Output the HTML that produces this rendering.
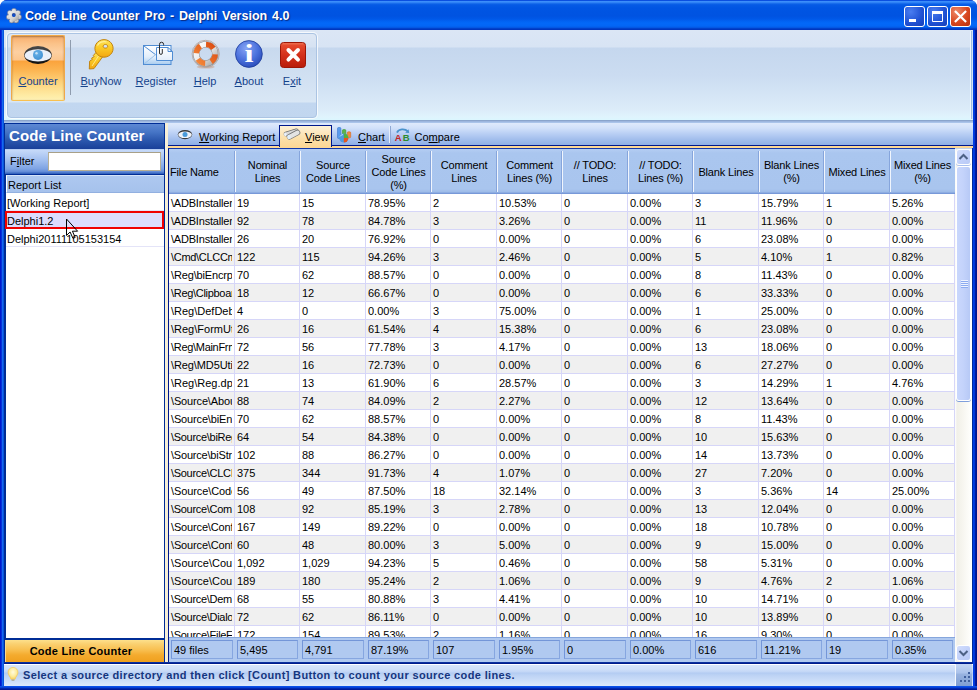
<!DOCTYPE html>
<html><head><meta charset="utf-8"><title>Code Line Counter Pro - Delphi Version 4.0</title>
<style>
*,*:before,*:after{box-sizing:border-box;margin:0;padding:0}
html,body{width:977px;height:690px;overflow:hidden;background:#fff}
body{font-family:"Liberation Sans","DejaVu Sans",sans-serif;font-size:11px;color:#000;position:relative}
div,span{position:absolute;white-space:nowrap}
u{text-decoration:underline}
#win{left:0;top:0;width:977px;height:690px;background:linear-gradient(90deg,#0019cf 0,#0019cf 1px,#0831d9 1px,#0831d9 2px,#166aee 2px,#166aee 3px,#0855dd 3px,#0855dd 4px,#00209c 4px,#00209c 973px,#003ce6 973px,#003ce6 974px,#0037d6 974px,#0037d6 975px,#001c9e 975px,#001c9e 976px,#00138c 976px);border-radius:7px 7px 0 0;overflow:hidden}
#wbot{left:0;top:686px;width:977px;height:4px;background:linear-gradient(#0a50e8 0,#0a50e8 1px,#0540d8 1px,#0540d8 2px,#0028b0 2px,#0028b0 3px,#001a98 3px)}
#title{left:0;top:0;width:977px;height:30px;background:linear-gradient(#0a4fe0 0,#0a4fe0 1px,#3c8ffb 1px,#3a8cfa 2px,#2478f0 3px,#0c61e8 4px,#055ae5 5px,#0055e3 8px,#0053e1 16px,#0058e8 19px,#0262f2 21px,#0368f8 23px,#0366f6 26px,#0458e4 27.5px,#0142cc 28.5px,#0030b8 30px)}
#title .txt{left:25px;top:9px;font-weight:bold;font-size:12.5px;color:#fff;text-shadow:1px 1px 1px #0a2a80;letter-spacing:0;word-spacing:1.35px}
.cap{top:6px;width:21px;height:21px;border:1px solid #fff;border-radius:3px;background:radial-gradient(circle at 30% 25%,#4a7df0,#1f50d2 60%,#163fb8)}
#bmin{left:904px}#bmax{left:927px}#bcls{left:950px;background:radial-gradient(circle at 30% 25%,#ee8a6a,#d8471f 55%,#b8300e)}
#client{left:4px;top:30px;width:969px;height:656px;overflow:hidden;background:#bfd4ee}
/* ribbon */
#ribbon{left:0;top:0;width:969px;height:93px;background:linear-gradient(#dbe6f5 0,#d8e4f4 17px,#c5d7ee 18px,#cbdcf1 45px,#dcecf9 80px,#e0f4fd 87px,#dbf6fe 90px,#8aa4cc 90px,#8aa4cc 91px,#9db6de 91px,#9db6de 92px,#aac4ea 92px)}
#redge{left:966px;top:1px;width:3px;height:88px;background:linear-gradient(90deg,#f0f6fc 0,#f0f6fc 1px,#a2bde1 1px,#a2bde1 2px,#d3e2f5 2px)}
#group{left:3px;top:3px;width:310px;height:85px;border:1px solid #abc4e3;border-radius:4px;box-shadow:0 0 0 1px rgba(255,255,255,.75);background:linear-gradient(#dee8f5 0,#d6e2f2 13px,#c8d9ee 14px,#d3e2f3 50px,#d9e7f5 68px,#c2d7f0 69px,#c1d6ef 85px)}
.rb{top:1px;height:66px;text-align:center;color:#15428b;font-size:11px}
.rb .lb{left:0;right:0;top:39px;text-align:center;line-height:14px}
#rb0 .lb{top:38px;left:-1px;right:-1px}
#rb0{left:3px;width:54px;border:1px solid #f0a848;border-bottom-color:#f8c050;border-radius:2px;background:linear-gradient(#f7ae6e 0,#fbc38a 8px,#fdd0a2 16px,#fcc68e 24px,#fba33c 25px,#fcb24e 33px,#fdd680 48px,#feeca6 60px,#fdf0b4 64px);box-shadow:inset 0 1px 2px rgba(120,80,40,.6)}
#sep{left:62px;top:6px;width:1px;height:55px;background:#8f9cae}

/* below ribbon strip */
#strip{display:none}
/* side panel: page x=4..164, y=123..662 => client coords x=0..160,y=93..632 */
#side{left:0;top:93px;width:161px;height:539px;background:#fff;border:1px solid #002d96;border-bottom:0}
#shead{left:0;top:0;width:159px;height:25px;background:linear-gradient(#5e89d3 0,#4675c6 8px,#2c58ae 16px,#1d459e 23px,#1a3f98 25px)}
#shead span{left:4px;top:3px;font-weight:bold;font-size:15px;color:#fff;letter-spacing:.08px}
#sfilt{left:0;top:25px;width:159px;height:25px;background:linear-gradient(#a4c0ee 0,#c6daf9 1px,#bcd2f6 4px,#9fbdef 12px,#7da2e3 20px,#5f89d6 23px,#3c69c2 24px,#3060ba 25px)}
#sfilt span{left:5px;top:6px;color:#000}
#sfilt i{position:absolute;left:43px;top:3px;width:113px;height:19px;background:#fff;border:1px solid #b8b096;border-top-color:#a8a088;display:block}
#slist{left:0;top:50px;width:159px;height:466px;background:#fff;border-top:1px solid #002d96;border-bottom:2px solid #002d96;border-left:1px solid #002d96}
#slh{left:0;top:0;width:158px;height:18px;background:linear-gradient(#aec8f0,#a6c2ec);border-left:1px solid #fff;border-top:1px solid #d5e3f8;border-bottom:1px solid #92b0e0}
#slh span{left:1px;top:3px}
.li{left:0;width:158px;height:18px;border-bottom:1px solid #e4e4f8}
.li span{left:1px;top:4px}
#lsel{background:#dcdcfc;border:2px solid #f00000}
#lsel{left:-1px;width:159px}
#lsel span{left:0;top:2px}
#sbtn{left:0;top:516px;width:159px;height:22px;border-left:1px solid #fbd890;background:linear-gradient(#fde08c 0,#fad070 4px,#f8bf50 10px,#f4ab2e 15px,#f0a01e 22px);text-align:center}
#sbtn span{left:0;right:8px;top:5px;font-weight:bold;color:#000;text-align:center;letter-spacing:.25px}
#split{left:161px;top:93px;width:3px;height:540px;background:#f7efd6}

/* right panel: page x=168..972 -> client x=164..968 ; page y=123.. -> client y=93 */
#tabs{left:164px;top:93px;width:805px;height:22px;background:linear-gradient(#dfeafc 0,#d2e1fa 5px,#bcd1f5 10px,#a4bfed 16px,#8fafe6 22px)}
#tabline{left:164px;top:115px;width:805px;height:3px;background:#fdd795;border-top:1px solid #00188c}
.tab{top:0;height:22px}
.tab span{top:8px}
#tact{left:111px;top:2px;width:53px;height:22px;border:1px solid #00188c;border-bottom:0;background:linear-gradient(#fdf1d8,#fce0ab 12px,#fdd795);z-index:2}
#tsep{left:221px;top:3px;width:2px;height:17px;border-left:1px solid #e6eefb;border-right:1px solid #8fa8d4}
#grid{left:164px;top:118px;width:787px;height:514px;background:#fff;border-left:1px solid #00188c;border-top:1px solid #1238a8;overflow:hidden}
#ghead{left:0;top:0;width:786px;height:45px;background:linear-gradient(#b4cdf3 0,#aac6ef 4px,#a9c5ee 40px,#9dbbe8 43px,#7f9fdc 44px,#6f92d4 45px)}
.hc{top:0;height:44px;text-align:center;line-height:13px;letter-spacing:-.15px}
.hc span{left:0;right:0;top:calc(50% + 1px);transform:translateY(-50%);text-align:center;white-space:nowrap}
.hc.l span{text-align:left;left:1px}
.hc:after{content:"";position:absolute;right:-1px;top:2px;height:41px;width:2px;border-left:1px solid #86a5dc;border-right:1px solid #f0f5fd}
.hc:last-child:after{display:none}
#gbody{left:0;top:45px;width:786px;height:444px;overflow:hidden;background:#fff}
.r{left:0;width:786px;height:18px;border-bottom:1px solid #d6d6f8;background:#fff}
.r.alt{background:#f0f0f0}
.c{top:0;height:17px;line-height:19px;padding-left:2px;overflow:hidden;border-right:1px solid #d6d6f8}
.c:first-child{border-right:0;width:63px !important;letter-spacing:-.3px}
.r:before{content:"";position:absolute;left:65px;top:0;width:1px;height:17px;background:#d6d6f8}
#gfoot{left:0;top:488px;width:786px;height:26px;background:#b0c9f0;border-top:1px solid #86a6dc}
.fc{top:2px;height:19px;line-height:19px;padding-left:2px;border:1px solid #7496d8;border-right-color:#86a6e0;border-bottom-color:#86a6e0}
#vsb{left:951px;top:119px;width:17px;height:513px;background:linear-gradient(90deg,#fff 0,#f1f0e8 2px,#f7f6f0 8px,#fefefb 15px,#fff 17px)}
.sbb{left:1px;width:15px;height:16px;border:1px solid #fff;border-radius:3px;background:linear-gradient(135deg,#d3defc,#c2d1fa 50%,#b9caf6)}
#sup{top:0}#sdn{top:496px}
#sth{left:1px;top:17px;width:15px;height:235px;border:1px solid #fff;border-radius:3px;background:linear-gradient(90deg,#c9d7fc 0,#c4d3fb 6px,#b7c9f6 13px);box-shadow:0 1px 0 #7f9fdc}
#sup{box-shadow:0 1px 0 #a9bfee}
#sgr{left:4px;top:113px;width:7px;height:8px;background:repeating-linear-gradient(#eef3ff 0,#eef3ff 1px,#8cabf0 1px,#8cabf0 2px)}
#rbord{left:968px;top:118px;width:1px;height:516px;background:#002a9c}
#gbot{left:0;top:632px;width:969px;height:2px;background:linear-gradient(#0a309e 0,#0a309e 1px,#001c8c 1px)}
/* status bar page y=664..686 -> client 634..656 */
#status{left:0;top:634px;width:969px;height:22px;background:linear-gradient(#fff 0,#fff 1px,#d6e4fa 1px,#cfdff9 5px,#c2d6f6 8px,#b3cbf2 9px,#bcd2f4 11px,#cadcf8 16px,#dde9fb 22px)}
#sgrip{left:951px;top:0;width:17px;height:22px;border-left:1px solid #f4f8fe;background:linear-gradient(#c4d6f4 0,#a9c1ea 9px,#98b3e0 10px,#7f9ed2 22px)}
#status span{left:19px;top:5px;font-weight:bold;color:#15367f;font-size:11px;letter-spacing:.36px}
</style></head><body>
<div id="win">
 <div id="title"><div class="txt">Code Line Counter Pro - Delphi Version 4.0</div>
  <div class="cap" id="bmin"></div><div class="cap" id="bmax"></div><div class="cap" id="bcls"></div>
 </div>
 <div id="wbot"></div>
 <div id="client">
  <div id="ribbon">
   <div id="redge"></div>
   <div id="group">
    <div class="rb" id="rb0"><span class="lb"><u>C</u>ounter</span></div>
    <div id="sep"></div>
    <div class="rb" style="left:66px;width:54px"><span class="lb"><u>B</u>uyNow</span></div>
    <div class="rb" style="left:120px;width:56px"><span class="lb"><u>R</u>egister</span></div>
    <div class="rb" style="left:176px;width:42px"><span class="lb"><u>H</u>elp</span></div>
    <div class="rb" style="left:218px;width:46px"><span class="lb"><u>A</u>bout</span></div>
    <div class="rb" style="left:264px;width:40px"><span class="lb">E<u>x</u>it</span></div>
   </div>
  </div>
  <div id="strip"></div>
  <div id="side">
   <div id="shead"><span>Code Line Counter</span></div>
   <div id="sfilt"><span>F<u>i</u>lter</span><i></i></div>
   <div id="slist">
    <div id="slh"><span>Report List</span></div>
    <div class="li" style="top:18px"><span>[Working Report]</span></div>
    <div class="li" id="lsel" style="top:36px"><span>Delphi1.2</span></div>
    <div class="li" style="top:54px"><span>Delphi20111105153154</span></div>
   </div>
   <div id="sbtn"><span>Code Line Counter</span></div>
  </div>
  <div id="split"></div>
  <div id="tabs">
   <div class="tab" style="left:0;width:111px"><span style="left:31px"><u>W</u>orking Report</span></div>
   <div class="tab" id="tact"><span style="left:25px;top:5px"><u>V</u>iew</span></div>
   <div class="tab" style="left:166px;width:54px"><span style="left:24px"><u>C</u>hart</span></div>
   <div id="tsep"></div>
   <div class="tab" style="left:224px;width:74px"><span style="left:22.5px">Co<u>m</u>pare</span></div>
  </div>
  <div id="tabline"></div>
  <div id="grid"><div id="ghead"><div class="hc l" style="left:0px;width:66px"><span>File Name</span></div><div class="hc" style="left:66px;width:65px"><span>Nominal<br>Lines</span></div><div class="hc" style="left:131px;width:66px"><span>Source<br>Code Lines</span></div><div class="hc" style="left:197px;width:65px"><span>Source<br>Code Lines<br>(%)</span></div><div class="hc" style="left:262px;width:66px"><span>Comment<br>Lines</span></div><div class="hc" style="left:328px;width:65px"><span>Comment<br>Lines (%)</span></div><div class="hc" style="left:393px;width:66px"><span>// TODO:<br>Lines</span></div><div class="hc" style="left:459px;width:65px"><span>// TODO:<br>Lines (%)</span></div><div class="hc" style="left:524px;width:66px"><span>Blank Lines</span></div><div class="hc" style="left:590px;width:65px"><span>Blank Lines<br>(%)</span></div><div class="hc" style="left:655px;width:66px"><span>Mixed Lines</span></div><div class="hc" style="left:721px;width:65px"><span>Mixed Lines<br>(%)</span></div></div><div id="gbody"><div class="r" style="top:0px"><div class="c" style="left:0px;width:66px;letter-spacing:-0.2px">\ADBInstaller\ADBInst.dpr</div><div class="c" style="left:66px;width:65px">19</div><div class="c" style="left:131px;width:66px">15</div><div class="c" style="left:197px;width:65px">78.95%</div><div class="c" style="left:262px;width:66px">2</div><div class="c" style="left:328px;width:65px">10.53%</div><div class="c" style="left:393px;width:66px">0</div><div class="c" style="left:459px;width:65px">0.00%</div><div class="c" style="left:524px;width:66px">3</div><div class="c" style="left:590px;width:65px">15.79%</div><div class="c" style="left:655px;width:66px">1</div><div class="c" style="left:721px;width:65px">5.26%</div></div><div class="r alt" style="top:18px"><div class="c" style="left:0px;width:66px;letter-spacing:-0.2px">\ADBInstaller\MainFrm.pas</div><div class="c" style="left:66px;width:65px">92</div><div class="c" style="left:131px;width:66px">78</div><div class="c" style="left:197px;width:65px">84.78%</div><div class="c" style="left:262px;width:66px">3</div><div class="c" style="left:328px;width:65px">3.26%</div><div class="c" style="left:393px;width:66px">0</div><div class="c" style="left:459px;width:65px">0.00%</div><div class="c" style="left:524px;width:66px">11</div><div class="c" style="left:590px;width:65px">11.96%</div><div class="c" style="left:655px;width:66px">0</div><div class="c" style="left:721px;width:65px">0.00%</div></div><div class="r" style="top:36px"><div class="c" style="left:0px;width:66px;letter-spacing:-0.2px">\ADBInstaller\Utils.pas</div><div class="c" style="left:66px;width:65px">26</div><div class="c" style="left:131px;width:66px">20</div><div class="c" style="left:197px;width:65px">76.92%</div><div class="c" style="left:262px;width:66px">0</div><div class="c" style="left:328px;width:65px">0.00%</div><div class="c" style="left:393px;width:66px">0</div><div class="c" style="left:459px;width:65px">0.00%</div><div class="c" style="left:524px;width:66px">6</div><div class="c" style="left:590px;width:65px">23.08%</div><div class="c" style="left:655px;width:66px">0</div><div class="c" style="left:721px;width:65px">0.00%</div></div><div class="r alt" style="top:54px"><div class="c" style="left:0px;width:66px;letter-spacing:-0.3px">\Cmd\CLCCmd.dpr</div><div class="c" style="left:66px;width:65px">122</div><div class="c" style="left:131px;width:66px">115</div><div class="c" style="left:197px;width:65px">94.26%</div><div class="c" style="left:262px;width:66px">3</div><div class="c" style="left:328px;width:65px">2.46%</div><div class="c" style="left:393px;width:66px">0</div><div class="c" style="left:459px;width:65px">0.00%</div><div class="c" style="left:524px;width:66px">5</div><div class="c" style="left:590px;width:65px">4.10%</div><div class="c" style="left:655px;width:66px">1</div><div class="c" style="left:721px;width:65px">0.82%</div></div><div class="r" style="top:72px"><div class="c" style="left:0px;width:66px;letter-spacing:-0.15px">\Reg\biEncrpt.pas</div><div class="c" style="left:66px;width:65px">70</div><div class="c" style="left:131px;width:66px">62</div><div class="c" style="left:197px;width:65px">88.57%</div><div class="c" style="left:262px;width:66px">0</div><div class="c" style="left:328px;width:65px">0.00%</div><div class="c" style="left:393px;width:66px">0</div><div class="c" style="left:459px;width:65px">0.00%</div><div class="c" style="left:524px;width:66px">8</div><div class="c" style="left:590px;width:65px">11.43%</div><div class="c" style="left:655px;width:66px">0</div><div class="c" style="left:721px;width:65px">0.00%</div></div><div class="r alt" style="top:90px"><div class="c" style="left:0px;width:66px;letter-spacing:-0.3px">\Reg\Clipboard.pas</div><div class="c" style="left:66px;width:65px">18</div><div class="c" style="left:131px;width:66px">12</div><div class="c" style="left:197px;width:65px">66.67%</div><div class="c" style="left:262px;width:66px">0</div><div class="c" style="left:328px;width:65px">0.00%</div><div class="c" style="left:393px;width:66px">0</div><div class="c" style="left:459px;width:65px">0.00%</div><div class="c" style="left:524px;width:66px">6</div><div class="c" style="left:590px;width:65px">33.33%</div><div class="c" style="left:655px;width:66px">0</div><div class="c" style="left:721px;width:65px">0.00%</div></div><div class="r" style="top:108px"><div class="c" style="left:0px;width:66px;letter-spacing:0px">\Reg\DefDebug.inc</div><div class="c" style="left:66px;width:65px">4</div><div class="c" style="left:131px;width:66px">0</div><div class="c" style="left:197px;width:65px">0.00%</div><div class="c" style="left:262px;width:66px">3</div><div class="c" style="left:328px;width:65px">75.00%</div><div class="c" style="left:393px;width:66px">0</div><div class="c" style="left:459px;width:65px">0.00%</div><div class="c" style="left:524px;width:66px">1</div><div class="c" style="left:590px;width:65px">25.00%</div><div class="c" style="left:655px;width:66px">0</div><div class="c" style="left:721px;width:65px">0.00%</div></div><div class="r alt" style="top:126px"><div class="c" style="left:0px;width:66px;letter-spacing:0px">\Reg\FormUtils.pas</div><div class="c" style="left:66px;width:65px">26</div><div class="c" style="left:131px;width:66px">16</div><div class="c" style="left:197px;width:65px">61.54%</div><div class="c" style="left:262px;width:66px">4</div><div class="c" style="left:328px;width:65px">15.38%</div><div class="c" style="left:393px;width:66px">0</div><div class="c" style="left:459px;width:65px">0.00%</div><div class="c" style="left:524px;width:66px">6</div><div class="c" style="left:590px;width:65px">23.08%</div><div class="c" style="left:655px;width:66px">0</div><div class="c" style="left:721px;width:65px">0.00%</div></div><div class="r" style="top:144px"><div class="c" style="left:0px;width:66px;letter-spacing:-0.3px">\Reg\MainFrm.pas</div><div class="c" style="left:66px;width:65px">72</div><div class="c" style="left:131px;width:66px">56</div><div class="c" style="left:197px;width:65px">77.78%</div><div class="c" style="left:262px;width:66px">3</div><div class="c" style="left:328px;width:65px">4.17%</div><div class="c" style="left:393px;width:66px">0</div><div class="c" style="left:459px;width:65px">0.00%</div><div class="c" style="left:524px;width:66px">13</div><div class="c" style="left:590px;width:65px">18.06%</div><div class="c" style="left:655px;width:66px">0</div><div class="c" style="left:721px;width:65px">0.00%</div></div><div class="r alt" style="top:162px"><div class="c" style="left:0px;width:66px;letter-spacing:-0.1px">\Reg\MD5Utils.pas</div><div class="c" style="left:66px;width:65px">22</div><div class="c" style="left:131px;width:66px">16</div><div class="c" style="left:197px;width:65px">72.73%</div><div class="c" style="left:262px;width:66px">0</div><div class="c" style="left:328px;width:65px">0.00%</div><div class="c" style="left:393px;width:66px">0</div><div class="c" style="left:459px;width:65px">0.00%</div><div class="c" style="left:524px;width:66px">6</div><div class="c" style="left:590px;width:65px">27.27%</div><div class="c" style="left:655px;width:66px">0</div><div class="c" style="left:721px;width:65px">0.00%</div></div><div class="r" style="top:180px"><div class="c" style="left:0px;width:66px;letter-spacing:0px">\Reg\Reg.dpr</div><div class="c" style="left:66px;width:65px">21</div><div class="c" style="left:131px;width:66px">13</div><div class="c" style="left:197px;width:65px">61.90%</div><div class="c" style="left:262px;width:66px">6</div><div class="c" style="left:328px;width:65px">28.57%</div><div class="c" style="left:393px;width:66px">0</div><div class="c" style="left:459px;width:65px">0.00%</div><div class="c" style="left:524px;width:66px">3</div><div class="c" style="left:590px;width:65px">14.29%</div><div class="c" style="left:655px;width:66px">1</div><div class="c" style="left:721px;width:65px">4.76%</div></div><div class="r alt" style="top:198px"><div class="c" style="left:0px;width:66px;letter-spacing:-0.15px">\Source\About.pas</div><div class="c" style="left:66px;width:65px">88</div><div class="c" style="left:131px;width:66px">74</div><div class="c" style="left:197px;width:65px">84.09%</div><div class="c" style="left:262px;width:66px">2</div><div class="c" style="left:328px;width:65px">2.27%</div><div class="c" style="left:393px;width:66px">0</div><div class="c" style="left:459px;width:65px">0.00%</div><div class="c" style="left:524px;width:66px">12</div><div class="c" style="left:590px;width:65px">13.64%</div><div class="c" style="left:655px;width:66px">0</div><div class="c" style="left:721px;width:65px">0.00%</div></div><div class="r" style="top:216px"><div class="c" style="left:0px;width:66px;letter-spacing:-0.15px">\Source\biEncrpt.pas</div><div class="c" style="left:66px;width:65px">70</div><div class="c" style="left:131px;width:66px">62</div><div class="c" style="left:197px;width:65px">88.57%</div><div class="c" style="left:262px;width:66px">0</div><div class="c" style="left:328px;width:65px">0.00%</div><div class="c" style="left:393px;width:66px">0</div><div class="c" style="left:459px;width:65px">0.00%</div><div class="c" style="left:524px;width:66px">8</div><div class="c" style="left:590px;width:65px">11.43%</div><div class="c" style="left:655px;width:66px">0</div><div class="c" style="left:721px;width:65px">0.00%</div></div><div class="r alt" style="top:234px"><div class="c" style="left:0px;width:66px;letter-spacing:-0.3px">\Source\biReg.pas</div><div class="c" style="left:66px;width:65px">64</div><div class="c" style="left:131px;width:66px">54</div><div class="c" style="left:197px;width:65px">84.38%</div><div class="c" style="left:262px;width:66px">0</div><div class="c" style="left:328px;width:65px">0.00%</div><div class="c" style="left:393px;width:66px">0</div><div class="c" style="left:459px;width:65px">0.00%</div><div class="c" style="left:524px;width:66px">10</div><div class="c" style="left:590px;width:65px">15.63%</div><div class="c" style="left:655px;width:66px">0</div><div class="c" style="left:721px;width:65px">0.00%</div></div><div class="r" style="top:252px"><div class="c" style="left:0px;width:66px;letter-spacing:-0.2px">\Source\biStrUtils.pas</div><div class="c" style="left:66px;width:65px">102</div><div class="c" style="left:131px;width:66px">88</div><div class="c" style="left:197px;width:65px">86.27%</div><div class="c" style="left:262px;width:66px">0</div><div class="c" style="left:328px;width:65px">0.00%</div><div class="c" style="left:393px;width:66px">0</div><div class="c" style="left:459px;width:65px">0.00%</div><div class="c" style="left:524px;width:66px">14</div><div class="c" style="left:590px;width:65px">13.73%</div><div class="c" style="left:655px;width:66px">0</div><div class="c" style="left:721px;width:65px">0.00%</div></div><div class="r alt" style="top:270px"><div class="c" style="left:0px;width:66px;letter-spacing:-0.3px">\Source\CLCIntf.pas</div><div class="c" style="left:66px;width:65px">375</div><div class="c" style="left:131px;width:66px">344</div><div class="c" style="left:197px;width:65px">91.73%</div><div class="c" style="left:262px;width:66px">4</div><div class="c" style="left:328px;width:65px">1.07%</div><div class="c" style="left:393px;width:66px">0</div><div class="c" style="left:459px;width:65px">0.00%</div><div class="c" style="left:524px;width:66px">27</div><div class="c" style="left:590px;width:65px">7.20%</div><div class="c" style="left:655px;width:66px">0</div><div class="c" style="left:721px;width:65px">0.00%</div></div><div class="r" style="top:288px"><div class="c" style="left:0px;width:66px;letter-spacing:-0.1px">\Source\CodeCounter.pas</div><div class="c" style="left:66px;width:65px">56</div><div class="c" style="left:131px;width:66px">49</div><div class="c" style="left:197px;width:65px">87.50%</div><div class="c" style="left:262px;width:66px">18</div><div class="c" style="left:328px;width:65px">32.14%</div><div class="c" style="left:393px;width:66px">0</div><div class="c" style="left:459px;width:65px">0.00%</div><div class="c" style="left:524px;width:66px">3</div><div class="c" style="left:590px;width:65px">5.36%</div><div class="c" style="left:655px;width:66px">14</div><div class="c" style="left:721px;width:65px">25.00%</div></div><div class="r alt" style="top:306px"><div class="c" style="left:0px;width:66px;letter-spacing:-0.3px">\Source\Compare.pas</div><div class="c" style="left:66px;width:65px">108</div><div class="c" style="left:131px;width:66px">92</div><div class="c" style="left:197px;width:65px">85.19%</div><div class="c" style="left:262px;width:66px">3</div><div class="c" style="left:328px;width:65px">2.78%</div><div class="c" style="left:393px;width:66px">0</div><div class="c" style="left:459px;width:65px">0.00%</div><div class="c" style="left:524px;width:66px">13</div><div class="c" style="left:590px;width:65px">12.04%</div><div class="c" style="left:655px;width:66px">0</div><div class="c" style="left:721px;width:65px">0.00%</div></div><div class="r" style="top:324px"><div class="c" style="left:0px;width:66px;letter-spacing:-0.15px">\Source\ConfigFrm.pas</div><div class="c" style="left:66px;width:65px">167</div><div class="c" style="left:131px;width:66px">149</div><div class="c" style="left:197px;width:65px">89.22%</div><div class="c" style="left:262px;width:66px">0</div><div class="c" style="left:328px;width:65px">0.00%</div><div class="c" style="left:393px;width:66px">0</div><div class="c" style="left:459px;width:65px">0.00%</div><div class="c" style="left:524px;width:66px">18</div><div class="c" style="left:590px;width:65px">10.78%</div><div class="c" style="left:655px;width:66px">0</div><div class="c" style="left:721px;width:65px">0.00%</div></div><div class="r alt" style="top:342px"><div class="c" style="left:0px;width:66px;letter-spacing:-0.15px">\Source\ConfigUtils.pas</div><div class="c" style="left:66px;width:65px">60</div><div class="c" style="left:131px;width:66px">48</div><div class="c" style="left:197px;width:65px">80.00%</div><div class="c" style="left:262px;width:66px">3</div><div class="c" style="left:328px;width:65px">5.00%</div><div class="c" style="left:393px;width:66px">0</div><div class="c" style="left:459px;width:65px">0.00%</div><div class="c" style="left:524px;width:66px">9</div><div class="c" style="left:590px;width:65px">15.00%</div><div class="c" style="left:655px;width:66px">0</div><div class="c" style="left:721px;width:65px">0.00%</div></div><div class="r" style="top:360px"><div class="c" style="left:0px;width:66px;letter-spacing:0px">\Source\CountFrm.pas</div><div class="c" style="left:66px;width:65px">1,092</div><div class="c" style="left:131px;width:66px">1,029</div><div class="c" style="left:197px;width:65px">94.23%</div><div class="c" style="left:262px;width:66px">5</div><div class="c" style="left:328px;width:65px">0.46%</div><div class="c" style="left:393px;width:66px">0</div><div class="c" style="left:459px;width:65px">0.00%</div><div class="c" style="left:524px;width:66px">58</div><div class="c" style="left:590px;width:65px">5.31%</div><div class="c" style="left:655px;width:66px">0</div><div class="c" style="left:721px;width:65px">0.00%</div></div><div class="r alt" style="top:378px"><div class="c" style="left:0px;width:66px;letter-spacing:0px">\Source\CountUtils.pas</div><div class="c" style="left:66px;width:65px">189</div><div class="c" style="left:131px;width:66px">180</div><div class="c" style="left:197px;width:65px">95.24%</div><div class="c" style="left:262px;width:66px">2</div><div class="c" style="left:328px;width:65px">1.06%</div><div class="c" style="left:393px;width:66px">0</div><div class="c" style="left:459px;width:65px">0.00%</div><div class="c" style="left:524px;width:66px">9</div><div class="c" style="left:590px;width:65px">4.76%</div><div class="c" style="left:655px;width:66px">2</div><div class="c" style="left:721px;width:65px">1.06%</div></div><div class="r" style="top:396px"><div class="c" style="left:0px;width:66px;letter-spacing:-0.3px">\Source\Demo.pas</div><div class="c" style="left:66px;width:65px">68</div><div class="c" style="left:131px;width:66px">55</div><div class="c" style="left:197px;width:65px">80.88%</div><div class="c" style="left:262px;width:66px">3</div><div class="c" style="left:328px;width:65px">4.41%</div><div class="c" style="left:393px;width:66px">0</div><div class="c" style="left:459px;width:65px">0.00%</div><div class="c" style="left:524px;width:66px">10</div><div class="c" style="left:590px;width:65px">14.71%</div><div class="c" style="left:655px;width:66px">0</div><div class="c" style="left:721px;width:65px">0.00%</div></div><div class="r alt" style="top:414px"><div class="c" style="left:0px;width:66px;letter-spacing:-0.3px">\Source\Dialogs.pas</div><div class="c" style="left:66px;width:65px">72</div><div class="c" style="left:131px;width:66px">62</div><div class="c" style="left:197px;width:65px">86.11%</div><div class="c" style="left:262px;width:66px">0</div><div class="c" style="left:328px;width:65px">0.00%</div><div class="c" style="left:393px;width:66px">0</div><div class="c" style="left:459px;width:65px">0.00%</div><div class="c" style="left:524px;width:66px">10</div><div class="c" style="left:590px;width:65px">13.89%</div><div class="c" style="left:655px;width:66px">0</div><div class="c" style="left:721px;width:65px">0.00%</div></div><div class="r" style="top:432px"><div class="c" style="left:0px;width:66px;letter-spacing:-0.3px">\Source\FileFind.pas</div><div class="c" style="left:66px;width:65px">172</div><div class="c" style="left:131px;width:66px">154</div><div class="c" style="left:197px;width:65px">89.53%</div><div class="c" style="left:262px;width:66px">2</div><div class="c" style="left:328px;width:65px">1.16%</div><div class="c" style="left:393px;width:66px">0</div><div class="c" style="left:459px;width:65px">0.00%</div><div class="c" style="left:524px;width:66px">16</div><div class="c" style="left:590px;width:65px">9.30%</div><div class="c" style="left:655px;width:66px">0</div><div class="c" style="left:721px;width:65px">0.00%</div></div></div><div id="gfoot"><div class="fc" style="left:2px;width:62px">49 files</div><div class="fc" style="left:68px;width:61px">5,495</div><div class="fc" style="left:133px;width:62px">4,791</div><div class="fc" style="left:199px;width:61px">87.19%</div><div class="fc" style="left:264px;width:62px">107</div><div class="fc" style="left:330px;width:61px">1.95%</div><div class="fc" style="left:395px;width:62px">0</div><div class="fc" style="left:461px;width:61px">0.00%</div><div class="fc" style="left:526px;width:62px">616</div><div class="fc" style="left:592px;width:61px">11.21%</div><div class="fc" style="left:657px;width:62px">19</div><div class="fc" style="left:723px;width:61px">0.35%</div></div></div>
  <div id="vsb"><div class="sbb" id="sup"><svg width="13" height="14" style="position:absolute;left:0;top:0"><path d="M2.5 9 L6.5 5 L10.5 9" fill="none" stroke="#4d6185" stroke-width="2"/></svg></div><div id="sth"><div id="sgr"></div></div><div class="sbb" id="sdn"><svg width="13" height="14" style="position:absolute;left:0;top:0"><path d="M2.5 5 L6.5 9 L10.5 5" fill="none" stroke="#4d6185" stroke-width="2"/></svg></div></div>
  <div id="gbot"></div><div id="rbord"></div>
  <div id="status"><span>Select a source directory and then click [Count] Button to count your source code lines.</span><div id="sgrip"><svg width="16" height="22" style="position:absolute;left:0;top:0"><g fill="#3f5f9c"><rect x="12" y="8" width="2" height="2"/><rect x="8" y="12" width="2" height="2"/><rect x="12" y="12" width="2" height="2"/><rect x="4" y="16" width="2" height="2"/><rect x="8" y="16" width="2" height="2"/><rect x="12" y="16" width="2" height="2"/></g></svg></div></div>
 </div>
<svg id="ico" width="977" height="690" viewBox="0 0 977 690" style="position:absolute;left:0;top:0;pointer-events:none;z-index:10">
<defs>
 <linearGradient id="gEye" x1="0" y1="0" x2="0" y2="1"><stop offset="0" stop-color="#4a4a4a"/><stop offset="1" stop-color="#101010"/></linearGradient>
 <radialGradient id="gIris" cx=".4" cy=".35" r=".7"><stop offset="0" stop-color="#6ab2e8"/><stop offset="1" stop-color="#3f8fd2"/></radialGradient>
 <linearGradient id="gKey" x1="0" y1="0" x2="0" y2="1"><stop offset="0" stop-color="#fde45c"/><stop offset=".45" stop-color="#fbcb28"/><stop offset="1" stop-color="#f3a710"/></linearGradient>
 <linearGradient id="gEnv" x1="0" y1="0" x2="0" y2="1"><stop offset="0" stop-color="#ffffff"/><stop offset=".6" stop-color="#e2eefb"/><stop offset="1" stop-color="#a9cdf0"/></linearGradient>
 <linearGradient id="gDoc" x1="0" y1="0" x2="0" y2="1"><stop offset="0" stop-color="#ffffff"/><stop offset="1" stop-color="#e3edf9"/></linearGradient>
 <radialGradient id="gInfo" cx=".4" cy=".3" r=".8"><stop offset="0" stop-color="#86a4f4"/><stop offset=".55" stop-color="#4a70dc"/><stop offset="1" stop-color="#2444b0"/></radialGradient>
 <linearGradient id="gExit" x1="0" y1="0" x2="0" y2="1"><stop offset="0" stop-color="#f07858"/><stop offset=".12" stop-color="#e4482c"/><stop offset=".5" stop-color="#d4301a"/><stop offset="1" stop-color="#b81c0a"/></linearGradient>
 <linearGradient id="gRing" x1="0" y1="0" x2="1" y2="1"><stop offset="0" stop-color="#ffffff"/><stop offset=".5" stop-color="#e8e8e8"/><stop offset="1" stop-color="#a8a8a8"/></linearGradient>
 <linearGradient id="gOr" x1="0" y1="0" x2="1" y2="1"><stop offset="0" stop-color="#f48a3c"/><stop offset="1" stop-color="#dc4c10"/></linearGradient>
</defs>
<!-- eye (Counter) -->
<g>
 <ellipse cx="38" cy="55" rx="13.8" ry="9" fill="url(#gEye)"/>
 <ellipse cx="38" cy="55.4" rx="13.3" ry="6.2" fill="#e9eff9"/>
 <circle cx="38" cy="54.9" r="5" fill="url(#gIris)"/>
 <circle cx="36.5" cy="53.3" r="1.2" fill="#c4e0f6"/>
</g>
<!-- key (BuyNow) -->
<g stroke="#c28412" stroke-width="1" stroke-linejoin="round">
 <path d="M96.2 52.2 L93.3 55.6 L94.2 56.6 L91.6 58.2 L92.4 59.4 L89.6 61.2 L89.3 69 L94 68.6 L102.6 56.8 Z" fill="url(#gKey)"/>
 <path fill-rule="evenodd" d="M104 39.6 a9.1 8.8 0 1 0 .01 0 Z M105.4 44.5 a2.3 1.8 0 1 0 .01 0 Z" fill="url(#gKey)"/>
</g>
<path d="M98.5 56 L92 66" stroke="#fde88a" stroke-width="1" fill="none"/>
<path d="M97.5 45.5 a7 6 0 0 1 9 -3.5" stroke="#fff3a8" stroke-width="1.2" fill="none" opacity=".8"/>
<!-- envelope (Register) -->
<g>
 <rect x="143.5" y="45.5" width="27.5" height="19" fill="url(#gEnv)" stroke="#4f8cd3"/>
 <path d="M144 46 L155.6 54.7" stroke="#4f8cd3" stroke-width="1" fill="none"/>
 <path d="M144 64 L155.6 54.7" stroke="#9cc3ea" stroke-width="1" fill="none"/>
 <path d="M156.5 47.5 H168 V51.5 H172.5 V60.5 H156.5 Z" fill="url(#gDoc)" stroke="#4f8cd3"/>
 <path d="M168 47.5 L172.5 51.5" stroke="#4f8cd3" stroke-width="1" fill="none"/>
 <path d="M163.6 45.4 V44.3 A2.05 2.05 0 0 0 159.5 44.3 V53 A1.4 1.4 0 0 0 162.3 53 V49" stroke="#2c2c2c" stroke-width="1" fill="none"/>
</g>
<!-- lifebuoy (Help) -->
<g>
 <ellipse cx="205.7" cy="67" rx="9" ry="1.6" fill="#c47a50" opacity=".35"/>
 <circle cx="205.7" cy="53.9" r="13.6" fill="none" stroke="#b4a094" stroke-width=".8"/>
 <circle cx="205.7" cy="53.9" r="9.5" fill="none" stroke="#8c8c8c" stroke-width="6.4"/>
 <circle cx="205.7" cy="53.9" r="9.5" fill="none" stroke="url(#gRing)" stroke-width="5.4"/>
 <circle cx="205.7" cy="53.9" r="9.5" fill="none" stroke="url(#gOr)" stroke-width="5.4" stroke-dasharray="8.6 6.323" transform="rotate(-88 205.7 53.9)"/>
</g>
<!-- info (About) -->
<g>
 <circle cx="248.9" cy="54" r="13.4" fill="url(#gInfo)" stroke="#1d3c9a" stroke-width=".8"/>
 <text x="0" y="0" text-anchor="middle" font-family="Liberation Serif,serif" font-weight="bold" font-size="25" fill="#fff" transform="translate(249.1 61.6) scale(1.3 1)">i</text>
</g>
<!-- exit -->
<g>
 <rect x="280.5" y="42.5" width="25" height="25" rx="3" fill="url(#gExit)" stroke="#9c1606"/>
 <path d="M288.4 50 L298 59.6 M298 50 L288.4 59.6" stroke="#fff" stroke-width="3.9" stroke-linecap="round"/>
</g>

<!-- title gear -->
<g>
 <defs><linearGradient id="gGear" x1="0" y1="0" x2="1" y2="1"><stop offset="0" stop-color="#f4f4f4"/><stop offset=".6" stop-color="#cfcfcf"/><stop offset="1" stop-color="#8e8e8e"/></linearGradient></defs>
 <g fill="url(#gGear)" stroke="#4a5a8a" stroke-width=".5">
  <circle cx="14" cy="10.9" r="2.6"/><circle cx="18" cy="12.8" r="2.6"/><circle cx="19" cy="17" r="2.6"/><circle cx="16.2" cy="20.4" r="2.6"/><circle cx="11.8" cy="20.4" r="2.6"/><circle cx="9" cy="17" r="2.6"/><circle cx="10" cy="12.8" r="2.6"/>
 </g>
 <circle cx="14" cy="15.9" r="5.4" fill="url(#gGear)"/>
 <circle cx="13.8" cy="15" r="2" fill="#2a4a9c"/><circle cx="13.8" cy="15.5" r="1.2" fill="#0a50d8"/>
</g>
<!-- caption glyphs -->
<rect x="909" y="19" width="7" height="3" fill="#fff"/>
<path d="M932.5 12.5 H942.5 V21.5 H932.5 Z" fill="none" stroke="#fff" stroke-width="1"/><rect x="932" y="11" width="11" height="3" fill="#fff"/>
<path d="M955.7 11.7 L965.3 21.3 M965.3 11.7 L955.7 21.3" stroke="#fff" stroke-width="2.2" stroke-linecap="square"/>
<!-- tab: small eye -->
<g>
 <ellipse cx="185" cy="134.6" rx="7.2" ry="4.6" fill="#3a3a3a"/>
 <ellipse cx="185" cy="134.8" rx="6.8" ry="3.3" fill="#eef2fa"/>
 <circle cx="185" cy="134.6" r="2.5" fill="#4a9ada"/>
</g>
<!-- tab: binoculars -->
<g stroke-linecap="round">
 <path d="M286 134 L296.5 130.8" stroke="#6e6e6e" stroke-width="4.6"/><path d="M286 134 L296.5 130.8" stroke="#d9d9d9" stroke-width="3.2"/>
 <path d="M289.5 136.8 L297.5 132.6" stroke="#6e6e6e" stroke-width="5.6"/><path d="M289.5 136.8 L297.5 132.6" stroke="#e3e3e3" stroke-width="4.2"/>
 <ellipse cx="285.3" cy="134.4" rx="1.3" ry="1.8" fill="#eaf2fc" stroke="none"/><ellipse cx="288.9" cy="137" rx="1.7" ry="2.2" fill="#dfeefc" stroke="none"/>
</g>
<!-- tab: chart -->
<g>
 <rect x="337.5" y="127.5" width="3.4" height="11" rx="1" fill="#5a9aec" stroke="#3a78d0" stroke-width=".6"/>
 <rect x="342.4" y="129.6" width="3.4" height="8" rx="1" fill="#5cb648" stroke="#3a9430" stroke-width=".6"/>
 <rect x="347.3" y="131.8" width="3.4" height="6" rx="1" fill="#f08a3c" stroke="#d86a20" stroke-width=".6"/>
 <circle cx="343.8" cy="138" r="4.6" fill="#4d9ae0"/>
 <path d="M343.8 138 L343.8 133.4 A4.6 4.6 0 0 1 348.4 138 Z" fill="#52b040"/>
 <path d="M343.8 138 L348.4 138 A4.6 4.6 0 0 1 343.8 142.6 Z" fill="#e8541c"/>
 <path d="M340 136.5 a4 3 0 0 1 3 -2" stroke="#bfe0fa" stroke-width="1" fill="none"/>
</g>
<!-- tab: compare AB -->
<g font-family="Liberation Sans,sans-serif" font-weight="bold" font-size="9.5">
 <path d="M397 132.6 C398.5 128.6 405 128.4 407.6 131.2" fill="none" stroke="#4a92cc" stroke-width="1.8"/>
 <path d="M405.2 132.8 L409.2 133 L408.6 129.2 Z" fill="#4a92cc"/>
 <text x="394.8" y="141" fill="#c42222">A</text><text x="402.8" y="141" fill="#2d8c2d">B</text>
</g>
<!-- status bulb -->
<g>
 <defs><radialGradient id="gBulb" cx=".5" cy=".4" r=".6"><stop offset="0" stop-color="#fffbe0"/><stop offset=".6" stop-color="#fdeb9a"/><stop offset="1" stop-color="#f8cf58"/></radialGradient></defs>
 <path d="M13 667.4 C9.8 667.4 8 669.8 8 672.4 C8 675 10.4 676.6 11 679.4 H15 C15.6 676.6 18 675 18 672.4 C18 669.8 16.2 667.4 13 667.4 Z" fill="url(#gBulb)" stroke="#f4c860" stroke-width=".7"/>
 <rect x="11.4" y="679.2" width="3.2" height="1.8" rx=".8" fill="#b0b0a8"/>
</g>
<!-- mouse cursor -->
<path d="M66.5 219 V235.4 L70.1 232 L73 238.4 L75.2 237.4 L72.4 231.2 H77.6 Z" fill="none" stroke="#000" stroke-width="1" stroke-linejoin="miter"/>
</svg>

</div>
</body></html>
